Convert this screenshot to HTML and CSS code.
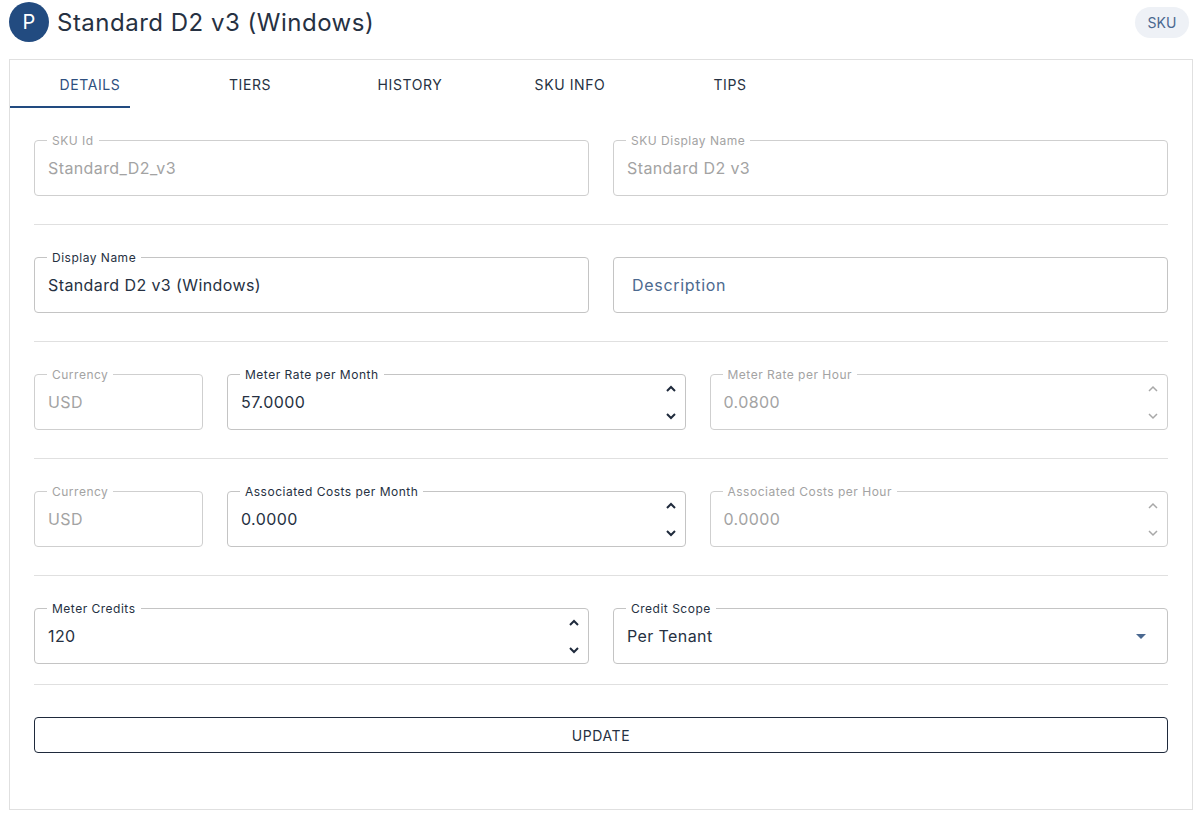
FILE: index.html
```html
<!DOCTYPE html>
<html lang="en">
<head>
  <meta charset="UTF-8" />
  <meta name="viewport" content="width=device-width, initial-scale=1.0" />
  <link rel="stylesheet" href="styles.css">
</head>
<body>
  <div class="page">
    <header class="top">
      <div class="title-wrap">
        <div class="avatar">P</div>
        <h1>Standard D2 v3 (Windows)</h1>
      </div>
      <span class="chip">SKU</span>
    </header>

    <div class="card">
      <nav class="tabs">
        <div class="tab active">Details</div>
        <div class="tab">Tiers</div>
        <div class="tab">History</div>
        <div class="tab">SKU Info</div>
        <div class="tab">Tips</div>
      </nav>

      <div class="form">
        <div class="row two">
          <div class="field disabled">
            <span class="label">SKU Id</span>
            <span class="value">Standard_D2_v3</span>
          </div>
          <div class="field disabled">
            <span class="label">SKU Display Name</span>
            <span class="value">Standard D2 v3</span>
          </div>
        </div>
        <div class="divider"></div>

        <div class="row two">
          <div class="field">
            <span class="label">Display Name</span>
            <span class="value">Standard D2 v3 (Windows)</span>
          </div>
          <div class="field">
            <span class="placeholder">Description</span>
          </div>
        </div>
        <div class="divider"></div>

        <div class="row three">
          <div class="field disabled">
            <span class="label">Currency</span>
            <span class="value">USD</span>
          </div>
          <div class="field">
            <span class="label">Meter Rate per Month</span>
            <span class="value">57.0000</span>
            <span class="spin">
              <svg width="12" height="8" viewBox="0 0 12 8"><polyline points="2,6 6,2 10,6" /></svg>
              <svg width="12" height="8" viewBox="0 0 12 8"><polyline points="2,2 6,6 10,2" /></svg>
            </span>
          </div>
          <div class="field disabled">
            <span class="label">Meter Rate per Hour</span>
            <span class="value">0.0800</span>
            <span class="spin">
              <svg width="12" height="8" viewBox="0 0 12 8"><polyline points="2,6 6,2 10,6" /></svg>
              <svg width="12" height="8" viewBox="0 0 12 8"><polyline points="2,2 6,6 10,2" /></svg>
            </span>
          </div>
        </div>
        <div class="divider"></div>

        <div class="row three">
          <div class="field disabled">
            <span class="label">Currency</span>
            <span class="value">USD</span>
          </div>
          <div class="field">
            <span class="label">Associated Costs per Month</span>
            <span class="value">0.0000</span>
            <span class="spin">
              <svg width="12" height="8" viewBox="0 0 12 8"><polyline points="2,6 6,2 10,6" /></svg>
              <svg width="12" height="8" viewBox="0 0 12 8"><polyline points="2,2 6,6 10,2" /></svg>
            </span>
          </div>
          <div class="field disabled">
            <span class="label">Associated Costs per Hour</span>
            <span class="value">0.0000</span>
            <span class="spin">
              <svg width="12" height="8" viewBox="0 0 12 8"><polyline points="2,6 6,2 10,6" /></svg>
              <svg width="12" height="8" viewBox="0 0 12 8"><polyline points="2,2 6,6 10,2" /></svg>
            </span>
          </div>
        </div>
        <div class="divider"></div>

        <div class="row two">
          <div class="field">
            <span class="label">Meter Credits</span>
            <span class="value">120</span>
            <span class="spin">
              <svg width="12" height="8" viewBox="0 0 12 8"><polyline points="2,6 6,2 10,6" /></svg>
              <svg width="12" height="8" viewBox="0 0 12 8"><polyline points="2,2 6,6 10,2" /></svg>
            </span>
          </div>
          <div class="field select">
            <span class="label">Credit Scope</span>
            <span class="value">Per Tenant</span>
            <svg class="caret" width="10" height="5" viewBox="0 0 10 5"><polygon points="0,0 10,0 5,5" /></svg>
          </div>
        </div>
        <div class="divider tight"></div>

        <button class="update">Update</button>
      </div>
    </div>
  </div>
</body>
</html>
```

FILE: styles.css
```css
body {
  margin: 0;
  background: #fff;
  font-family: Inter, "Noto Sans", sans-serif;
  color: #263142;
}
.page {
  padding: 0 3px 8px 9px;
}

/* header */
.top {
  height: 44px;
  display: flex;
  align-items: center;
  justify-content: space-between;
  margin-bottom: 15px;
}
.title-wrap {
  display: flex;
  align-items: center;
  gap: 8px;
}
.avatar {
  width: 40px;
  height: 40px;
  border-radius: 50%;
  background: #224b80;
  color: #fff;
  font-size: 20px;
  display: flex;
  align-items: center;
  justify-content: center;
}
h1 {
  margin: 0;
  font-size: 24px;
  font-weight: 400;
  letter-spacing: 0.5px;
  color: #263142;
}
.chip {
  height: 31px;
  width: 54px;
  border-radius: 16px;
  background: #eef1f6;
  color: #4a6890;
  font-size: 14px;
  display: flex;
  align-items: center;
  justify-content: center;
  margin-right: 4px;
}

/* card + tabs */
.card {
  border: 1px solid #e0e0e0;
}
.tabs {
  display: flex;
  height: 48px;
}
.tab {
  width: 160px;
  display: flex;
  align-items: center;
  justify-content: center;
  font-size: 14px;
  font-weight: 400;
  text-transform: uppercase;
  letter-spacing: 0.6px;
  color: #263142;
  position: relative;
}
.tab.active {
  color: #2f5080;
}
.tab.active::after {
  content: "";
  position: absolute;
  left: 0;
  bottom: 0;
  width: 120px;
  height: 2px;
  background: #224b80;
}

/* form */
.form {
  padding: 32px 24px 56px;
}
.row {
  display: grid;
  gap: 24px;
}
.row.two {
  grid-template-columns: 1fr 1fr;
}
.row.three {
  grid-template-columns: 169px 1fr 1fr;
}
.divider {
  height: 1px;
  background: #e0e0e0;
  margin: 28px 0 32px;
}
.divider.tight {
  margin-top: 20px;
}

.field {
  position: relative;
  box-sizing: border-box;
  height: 56px;
  border: 1px solid #c4c4c4;
  border-radius: 4px;
  padding: 0 13px;
  display: flex;
  align-items: center;
}
.field.disabled {
  border-color: #cfcfcf;
}
.label {
  position: absolute;
  top: -8px;
  left: 12px;
  padding: 0 5px;
  background: #fff;
  font-size: 12px;
  line-height: 16px;
  letter-spacing: 0.5px;
  color: #263142;
}
.value {
  font-size: 16px;
  letter-spacing: 0.4px;
  color: #263142;
  flex: 1;
}
.disabled .label,
.disabled .value {
  color: #a3a3a3;
}
.placeholder {
  font-size: 16px;
  letter-spacing: 0.7px;
  color: #4d6a8f;
  padding-left: 5px;
}

.spin {
  display: flex;
  flex-direction: column;
  justify-content: space-between;
  height: 35px;
  margin-right: -5px;
}
.spin polyline {
  fill: none;
  stroke: #1f2a3c;
  stroke-width: 2;
}
.disabled .spin polyline {
  stroke: #a8a8a8;
  stroke-width: 1.5;
}
.caret {
  margin-right: 8px;
}
.caret polygon {
  fill: #4a6890;
}

.update {
  display: block;
  width: 100%;
  height: 36px;
  background: #fff;
  border: 1px solid #1f2a3c;
  border-radius: 4px;
  font-family: inherit;
  font-size: 14px;
  font-weight: 400;
  letter-spacing: 0.6px;
  text-transform: uppercase;
  color: #263142;
}
```
